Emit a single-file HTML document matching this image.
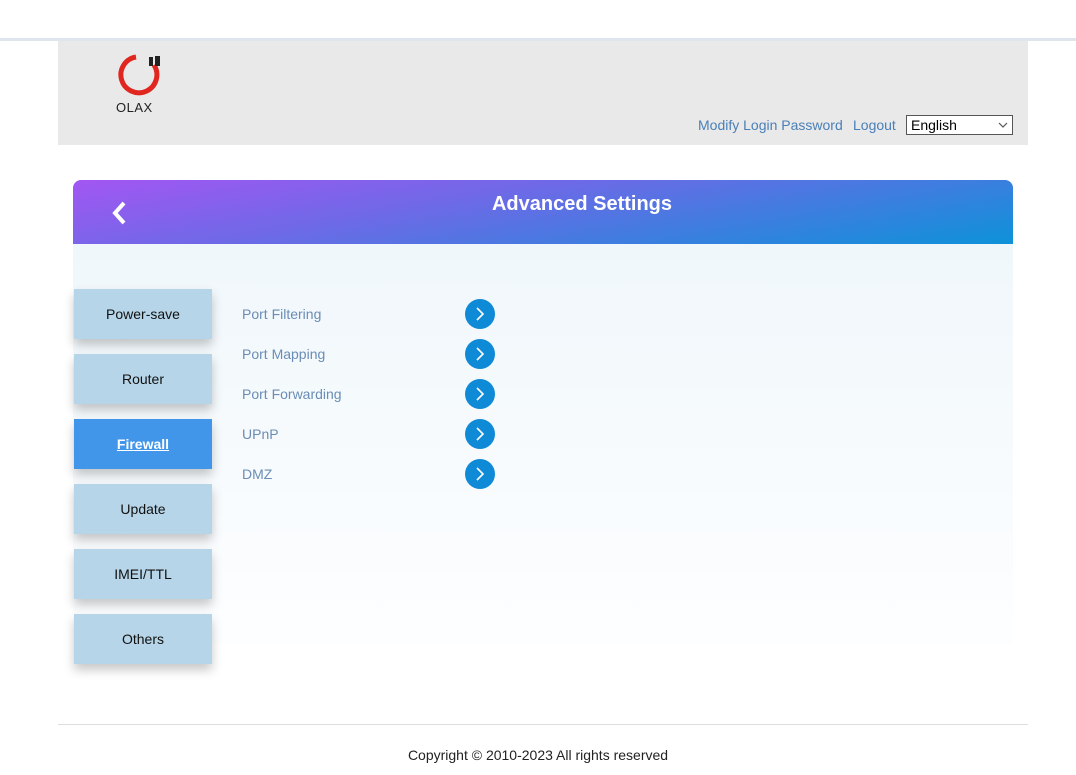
<!DOCTYPE html>
<html><head><meta charset="utf-8"><style>
*{margin:0;padding:0;box-sizing:border-box}
body{width:1076px;height:775px;background:#fff;font-family:"Liberation Sans",Arial,sans-serif;position:relative;overflow:hidden}
.topline{position:absolute;left:0;top:38px;width:1076px;height:3px;background:#dfe5ec}
.header{position:absolute;left:58px;top:41px;width:970px;height:104px;background:#e9e9e9}
.links{position:absolute;top:117px;font-size:14px;color:#4a7fb8}
.sel{position:absolute;left:906px;top:115px;width:107px;height:20px;border:1px solid #555;background:#fff;font-size:14px;color:#000;padding:1px 4px}
.sel svg{position:absolute;right:4px;top:6px}
.title{position:absolute;left:73px;top:180px;width:940px;height:64px;border-radius:8px 8px 0 0;background:linear-gradient(170deg,#a356f3 0%,#6c6ae6 40%,#0d92d8 100%)}
.title h1{position:absolute;left:0;width:100%;top:13px;text-align:center;font-size:20px;color:#fff;font-weight:bold;padding-left:78px}
.panel{position:absolute;left:73px;top:244px;width:940px;height:400px;background:linear-gradient(#f0f7fb,#fdfeff)}
.btn{position:absolute;left:74px;width:138px;height:50px;background:#b6d5e8;box-shadow:0 6px 10px rgba(0,0,0,.22);font-size:14px;color:#111;text-align:center;line-height:50px}
.btn.act{background:#4296ea;color:#fff;font-weight:bold;text-decoration:underline}
.item{position:absolute;left:242px;font-size:14px;color:#6a8db5}
.arr{position:absolute;left:465px;width:30px;height:30px;border-radius:50%;background:#0e8ad6}
.foot{position:absolute;left:58px;top:724px;width:970px;height:1px;background:#ddd}
.copy{position:absolute;left:0;width:100%;top:747px;text-align:center;font-size:14px;color:#222}
</style></head><body>
<div class="topline"></div>
<div class="header">
<svg style="position:absolute;left:52px;top:6px" width="60" height="70" viewBox="0 0 60 70">
<path d="M26 10 A18 18 0 1 0 44 18" fill="none" stroke="#e0261f" stroke-width="5"/>
<rect x="39" y="10" width="4" height="9" fill="#222"/><rect x="45" y="9" width="5" height="10" fill="#222"/>
<text x="6" y="65" font-family="Liberation Sans" font-size="13" fill="#222" letter-spacing="0.5">OLAX</text>
</svg>
</div>
<div class="links" style="left:698px">Modify Login Password</div>
<div class="links" style="left:853px">Logout</div>
<div class="sel">English<svg width="10" height="6" viewBox="0 0 10 6"><path d="M1 1 L5 5 L9 1" fill="none" stroke="#555" stroke-width="1.2"/></svg></div>
<div class="title"><svg style="position:absolute;left:38px;top:21px" width="16" height="24" viewBox="0 0 16 24"><path d="M13 2 L4 12 L13 22" fill="none" stroke="#fff" stroke-width="4"/></svg><h1>Advanced Settings</h1></div>
<div class="panel"></div>
<div class="btn" style="top:289px">Power-save</div>
<div class="btn" style="top:354px">Router</div>
<div class="btn act" style="top:419px">Firewall</div>
<div class="btn" style="top:484px">Update</div>
<div class="btn" style="top:549px">IMEI/TTL</div>
<div class="btn" style="top:614px">Others</div>
<div class="item" style="top:306px">Port Filtering</div>
<div class="item" style="top:346px">Port Mapping</div>
<div class="item" style="top:386px">Port Forwarding</div>
<div class="item" style="top:426px">UPnP</div>
<div class="item" style="top:466px">DMZ</div>
<svg width="0" height="0"><defs><g id="c"><path d="M12 9 L18 15 L12 21" fill="none" stroke="#fff" stroke-width="1.6"/></g></defs></svg>
<div class="arr" style="top:299px"><svg width="30" height="30"><use href="#c"/></svg></div>
<div class="arr" style="top:339px"><svg width="30" height="30"><use href="#c"/></svg></div>
<div class="arr" style="top:379px"><svg width="30" height="30"><use href="#c"/></svg></div>
<div class="arr" style="top:419px"><svg width="30" height="30"><use href="#c"/></svg></div>
<div class="arr" style="top:459px"><svg width="30" height="30"><use href="#c"/></svg></div>
<div class="foot"></div>
<div class="copy">Copyright © 2010-2023 All rights reserved</div>
</body></html>
